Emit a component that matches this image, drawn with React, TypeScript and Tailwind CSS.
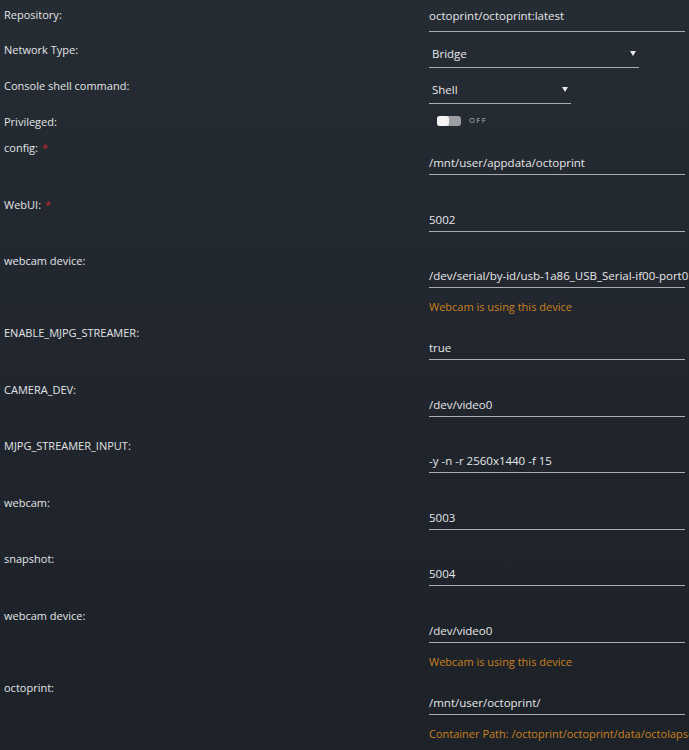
import React from 'react';

type Row = { label: string; value: string; required?: boolean; note?: string };

const rows: Row[] = [
  { label: 'config:', value: '/mnt/user/appdata/octoprint', required: true },
  { label: 'WebUI:', value: '5002', required: true },
  {
    label: 'webcam device:',
    value: '/dev/serial/by-id/usb-1a86_USB_Serial-if00-port0',
    note: 'Webcam is using this device',
  },
  { label: 'ENABLE_MJPG_STREAMER:', value: 'true' },
  { label: 'CAMERA_DEV:', value: '/dev/video0' },
  { label: 'MJPG_STREAMER_INPUT:', value: '-y -n -r 2560x1440 -f 15' },
  { label: 'webcam:', value: '5003' },
  { label: 'snapshot:', value: '5004' },
  { label: 'webcam device:', value: '/dev/video0', note: 'Webcam is using this device' },
  {
    label: 'octoprint:',
    value: '/mnt/user/octoprint/',
    note: 'Container Path: /octoprint/octoprint/data/octolapse',
  },
];

function Caret() {
  return (
    <svg width="6" height="5" viewBox="0 0 6 5" className="shrink-0">
      <path d="M0 0 H6 L3 5 Z" fill="#e6e6e6" />
    </svg>
  );
}

function Label({ children, required }: { children: React.ReactNode; required?: boolean }) {
  return (
    <div className="w-[429px] shrink-0 pl-1 leading-4 text-[11px] text-[#e2e4e6]">
      {children}
      {required && <span className="ml-1 text-[#c0262b]">*</span>}
    </div>
  );
}

function FieldRow({ row }: { row: Row }) {
  return (
    <div className={`flex ${row.note ? 'h-[72px]' : 'h-[56.5px]'}`}>
      <Label required={row.required}>{row.label}</Label>
      <div className="w-[260px] pt-[15px]">
        <div className="w-[256px] border-b border-[#a9adb2] pb-[3px] leading-4 text-[11.5px] text-[#e6e7e8] whitespace-nowrap">
          {row.value}
        </div>
        {row.note && (
          <div className="mt-[11px] leading-4 text-[11px] text-[#c9801c] whitespace-nowrap">{row.note}</div>
        )}
      </div>
    </div>
  );
}

export default function App() {
  return (
    <div
      className="w-[689px] h-[750px] overflow-hidden bg-gradient-to-b from-[#262c34] via-[#21262e] to-[#1d2229]"
      style={{ fontFamily: '"Open Sans", "DejaVu Sans", sans-serif' }}
    >
      <div className="pt-[7px]">
        {/* Repository */}
        <div className="flex h-[35px]">
          <Label>Repository:</Label>
          <div className="w-[256px] border-b border-[#a9adb2] h-[25px] pt-px leading-4 text-[11.5px] text-[#e6e7e8]">
            octoprint/octoprint:latest
          </div>
        </div>

        {/* Network type */}
        <div className="flex h-[36px]">
          <Label>Network Type:</Label>
          <div className="w-[210px] border-b border-[#a9adb2] h-[26px] pt-[4px] pl-[3px] pr-[3px] flex items-start justify-between">
            <span className="leading-4 text-[11.5px] text-[#e6e7e8]">Bridge</span>
            <span className="mt-[5px]">
              <Caret />
            </span>
          </div>
        </div>

        {/* Console */}
        <div className="flex h-[36px]">
          <Label>Console shell command:</Label>
          <div className="w-[142px] border-b border-[#a9adb2] h-[26px] pt-[4px] pl-[3px] pr-[3px] flex items-start justify-between">
            <span className="leading-4 text-[11.5px] text-[#e6e7e8]">Shell</span>
            <span className="mt-[5px]">
              <Caret />
            </span>
          </div>
        </div>

        {/* Privileged */}
        <div className="flex h-[26px]">
          <Label>Privileged:</Label>
          <div className="pl-[8px] pt-px flex items-center gap-[8px] h-[12px]">
            <div className="relative w-[24px] h-[10px] rounded-[3px] bg-[#9d9fa2]">
              <div className="absolute left-0 top-0 w-[12px] h-[10px] rounded-[3px] bg-[#f4f4f4]" />
            </div>
            <span className="text-[7.5px] tracking-[1.5px] text-[#b9bcbf] leading-none">OFF</span>
          </div>
        </div>

        {rows.map((row, i) => (
          <FieldRow key={i} row={row} />
        ))}
      </div>
    </div>
  );
}
